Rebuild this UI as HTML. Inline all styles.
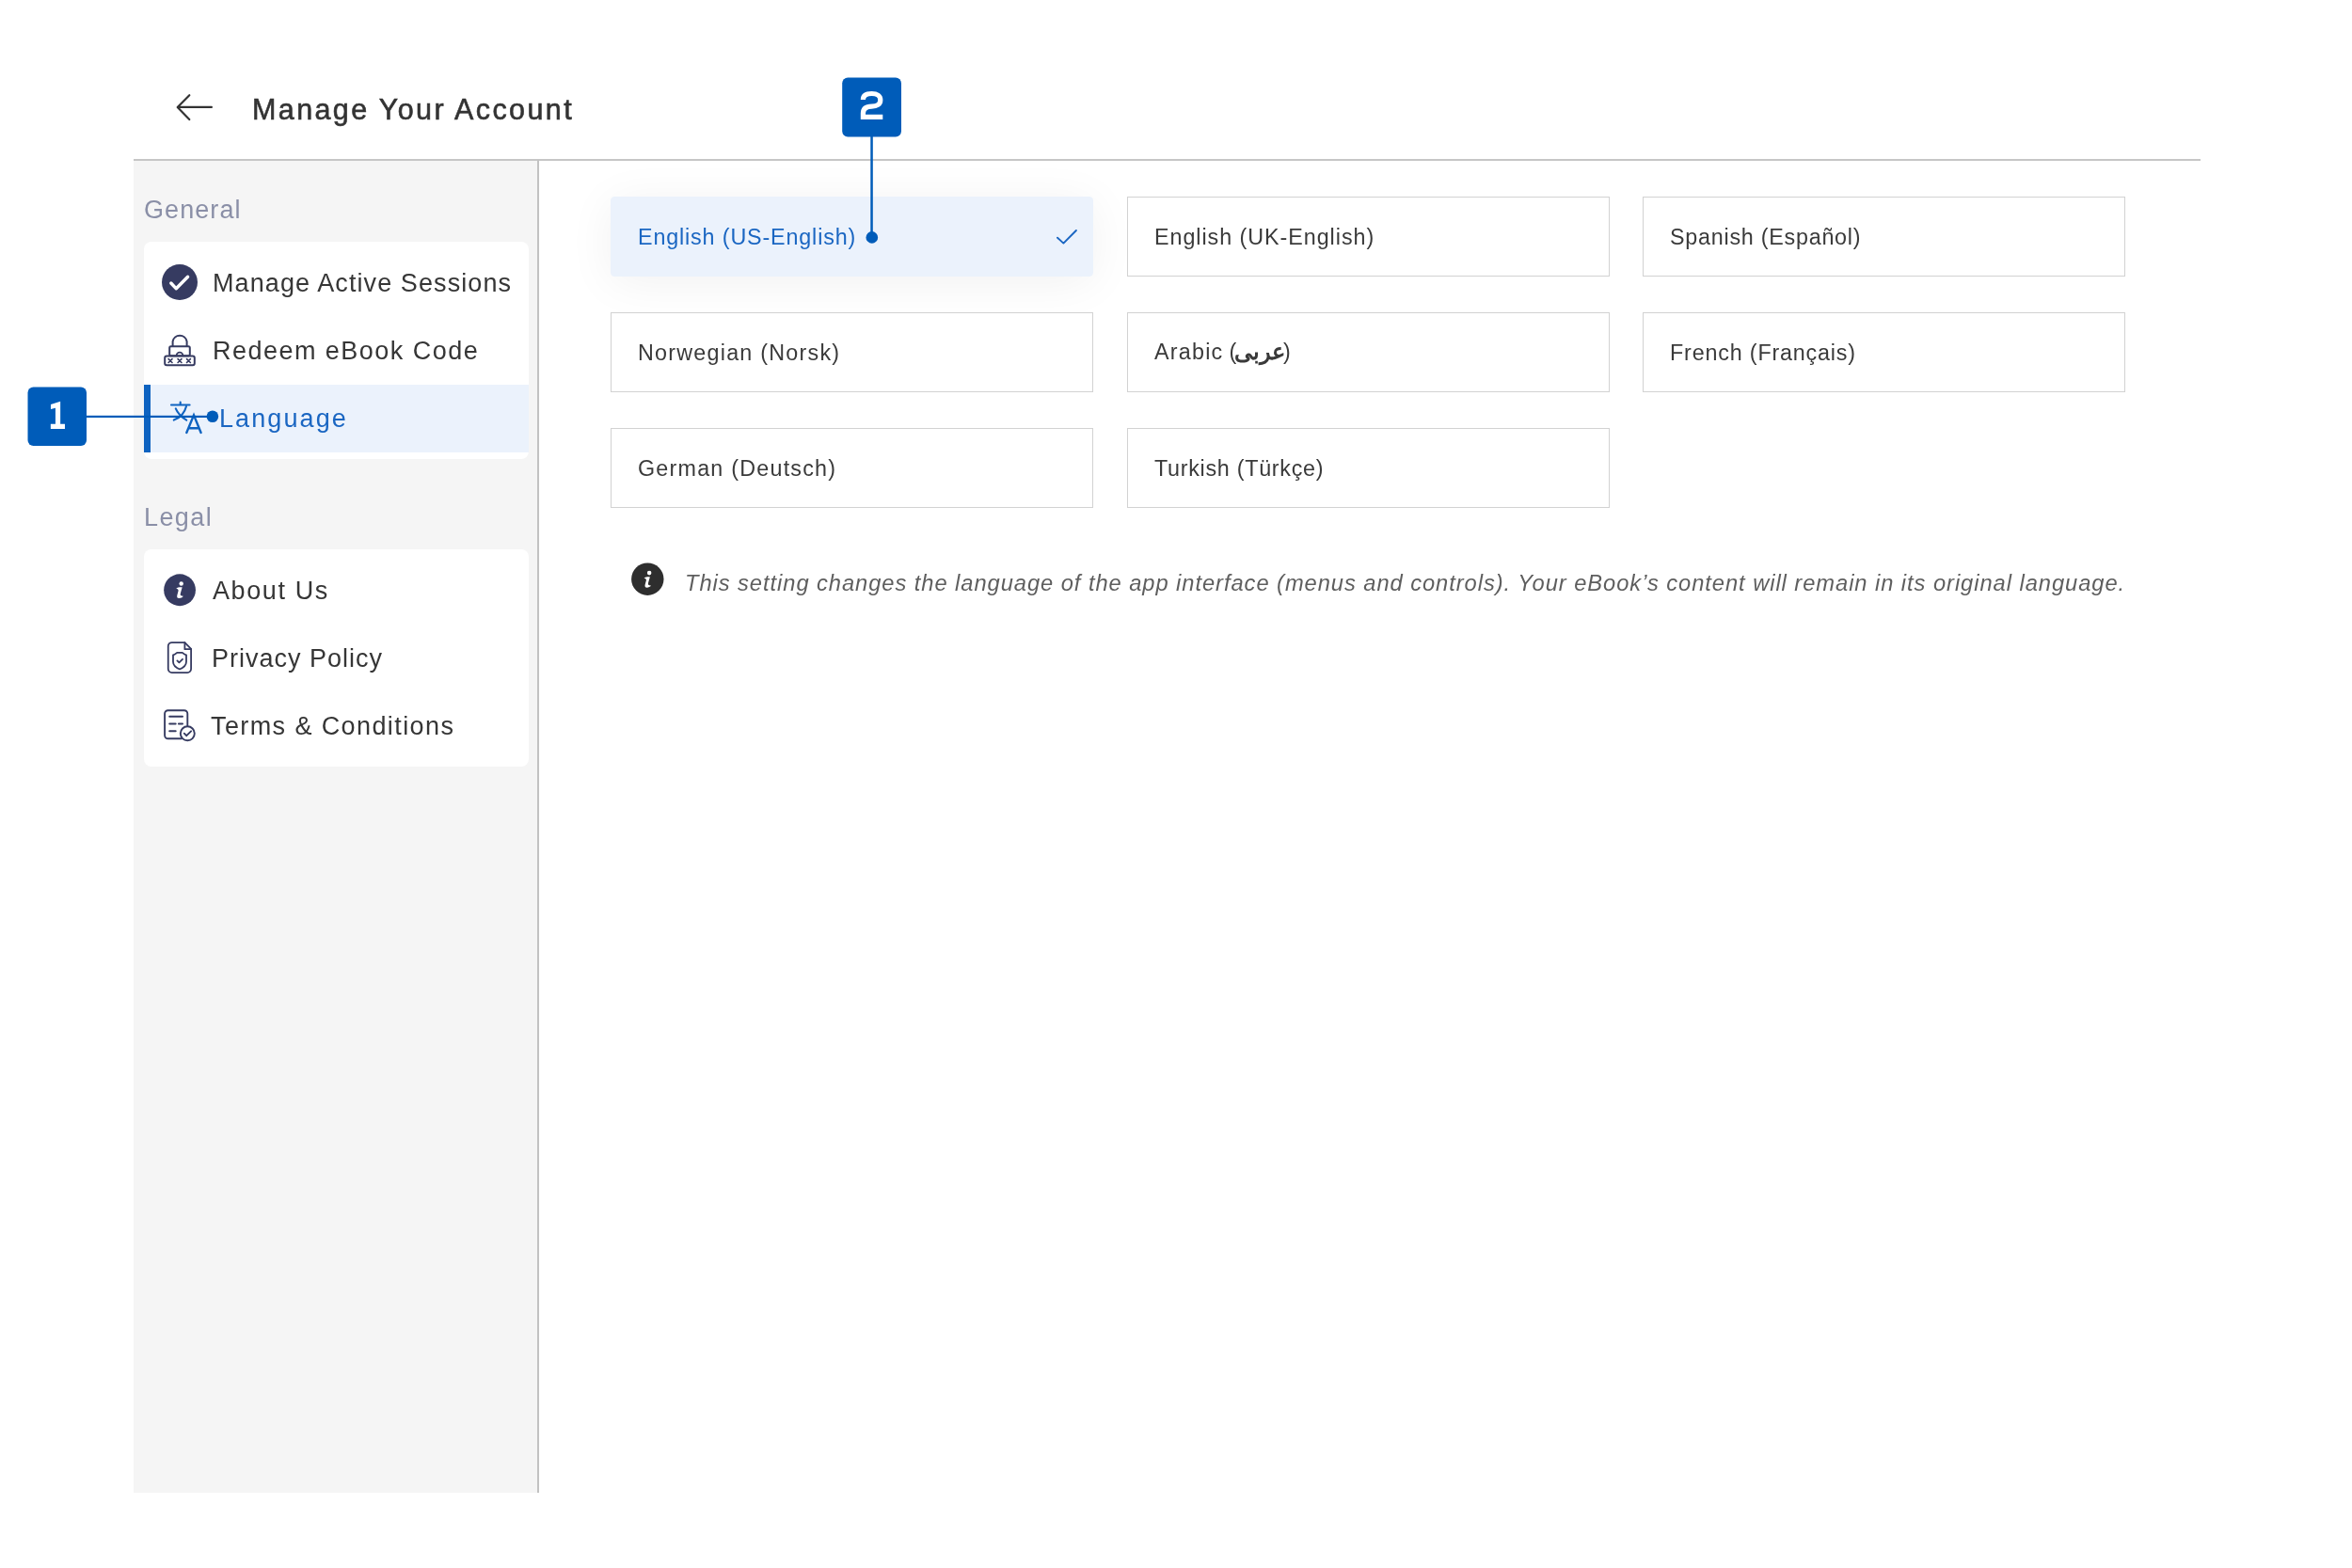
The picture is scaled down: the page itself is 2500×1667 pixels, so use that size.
<!DOCTYPE html>
<html>
<head>
<meta charset="utf-8">
<style>
html,body{margin:0;padding:0;}
body{width:2500px;height:1667px;position:relative;overflow:hidden;background:#fff;font-family:"Liberation Sans",sans-serif;}
.a{position:absolute;}
.t{position:absolute;white-space:nowrap;line-height:1;will-change:transform;}
#hline{left:142px;top:169px;width:2197px;height:2px;background:#c6c6c6;}
#side{left:142px;top:171px;width:429px;height:1416px;background:#f5f5f5;}
#vline{left:571px;top:170px;width:2px;height:1417px;background:#c2c2c2;}
.card{position:absolute;left:153px;width:408.5px;background:#fff;border-radius:8px;}
.item{color:#363636;font-size:27px;}
.lab{color:#8a8fa7;font-size:27px;}
.lang{position:absolute;width:511px;height:83px;border:1px solid #d2d2d2;background:#fff;}
.lang span{will-change:transform;position:absolute;left:28px;top:1px;line-height:83px;font-size:23.3px;color:#3a3a3a;white-space:nowrap;}
#sel{background:#ebf2fc;border-color:#ebf2fc;border-radius:4px;box-shadow:0 6px 50px rgba(0,0,0,0.06);}
#sel span{color:#1a66c2;}
</style>
</head>
<body>
<!-- header -->
<svg class="a" style="left:0;top:0" width="2500" height="200">
  <path d="M224.9,113.9 H188.9 M201.3,101.2 L188.7,113.9 L201.3,127" fill="none" stroke="#333" stroke-width="2.2" stroke-linecap="round" stroke-linejoin="round"/>
</svg>
<div class="t" style="left:268px;top:101px;font-size:30.5px;color:#333;letter-spacing:2.38px;-webkit-text-stroke:0.6px #333;">Manage Your Account</div>

<div class="a" id="hline"></div>
<div class="a" id="side"></div>
<div class="a" id="vline"></div>

<!-- sidebar -->
<div class="t lab" style="left:153px;top:210px;letter-spacing:1.07px;">General</div>
<div class="card" style="top:257px;height:231px;"></div>
<div class="a" style="left:153px;top:409px;width:409px;height:72px;background:#ebf2fc;"></div>
<div class="a" style="left:153px;top:409px;width:7px;height:72px;background:#0f63c0;"></div>

<div class="t lab" style="left:153px;top:537px;letter-spacing:1.4px;">Legal</div>
<div class="card" style="top:584px;height:231px;"></div>
<svg class="a" style="left:0;top:0" width="600" height="1667">
  <!-- check circle -->
  <circle cx="191" cy="300" r="19" fill="#363b61"/>
  <path d="M181.8,301 L187.3,306.8 L199.6,294.2" fill="none" stroke="#fff" stroke-width="3.4" stroke-linecap="round" stroke-linejoin="round"/>
  <!-- lock -->
  <g fill="none" stroke="#363b61" stroke-width="2">
    <path d="M183.6,368.2 V363 A7.6,7.6 0 0 1 198.6,363 V368.2"/>
    <rect x="180.2" y="368.2" width="21.6" height="10" rx="1.5"/>
    <rect x="175.2" y="378.6" width="31.6" height="9.6" rx="2"/>
    <path d="M187.6,378.6 V378 A3.4,3.4 0 0 1 194.4,378 V378.6" stroke-width="1.7"/>
    <path d="M179.1,381.6 l3.9,3.9 m-3.9,0 l3.9,-3.9 M189.05,381.6 l3.9,3.9 m-3.9,0 l3.9,-3.9 M198.5,381.6 l3.9,3.9 m-3.9,0 l3.9,-3.9" stroke-width="1.6" stroke-linecap="round"/>
  </g>
  <!-- translate icon -->
  <g fill="none" stroke="#0f63c0" stroke-width="2.1" stroke-linecap="round">
    <path d="M182,430.5 H201.6 M191.7,427.6 V430.4"/>
    <path d="M186.8,434.4 C188.5,438.5 192,443 198.2,446.6"/>
    <path d="M198,432 C196.5,438 192,444 184.8,446.6"/>
    <path d="M198.3,460 L206,441.4 L213.6,460 M201.3,455.3 H210.8" stroke-width="2.4"/>
  </g>
  <!-- about icon -->
  <circle cx="191.05" cy="627.25" r="16.9" fill="#363b61"/>
  <g transform="translate(191.05,627.25)" fill="#fff">
    <circle cx="1.65" cy="-6.75" r="2.2"/>
    <path d="M-3.85,-1.75 C-2.55,-2.75 -0.05,-3.25 2.55,-3.05 C2.45,-1.75 1.45,0.75 0.75,3.75 C0.25,5.75 0.95,6.25 3.75,6.55 C2.95,8.05 0.95,8.75 -0.55,8.75 C-2.75,8.75 -3.25,7.35 -2.65,5.15 L-1.45,0.75 C-1.25,-0.45 -2.25,-1.25 -3.85,-1.75 Z"/>
  </g>
  <!-- privacy icon -->
  <g fill="none" stroke="#363b61" stroke-width="1.8" stroke-linejoin="round" stroke-linecap="round">
    <path d="M196.4,683.05 H182.75 A4,4 0 0 0 178.75,687.05 V711.03 A4,4 0 0 0 182.75,715.03 H199.1 A4,4 0 0 0 203.1,711.03 V689.8 Z"/>
    <path d="M196.4,683.05 V690.2 H203.1"/>
    <path d="M188.4,693.9 H193.6 C194.6,693.9 195.2,695.6 198,696.3 V703.5 C198,707.5 194.5,710 191,711.5 C187.5,710 184,707.5 184,703.5 V696.3 C186.8,695.6 187.4,693.9 188.4,693.9 Z"/>
    <path d="M188.4,702.4 L190.4,704.4 L194,700.8"/>
  </g>
  <!-- terms icon -->
  <g fill="none" stroke="#363b61" stroke-width="1.9" stroke-linecap="round">
    <path d="M192.9,785.25 H178.6 A3.5,3.5 0 0 1 175.1,781.75 V758.7 A3.5,3.5 0 0 1 178.6,755.2 H195.8 A3.5,3.5 0 0 1 199.3,758.7 V771.5"/>
    <path d="M180.2,761.8 H194 M180.2,769.55 H186.7 M189.9,769.55 H194 M180.2,777.3 H186.7" stroke-width="2"/>
    <circle cx="199.3" cy="779.8" r="7.5"/>
    <path d="M195.8,779.7 L198.2,782.2 L203.1,777.3" stroke-linejoin="round"/>
  </g>
</svg>

<div class="t item" style="left:226px;top:288px;letter-spacing:1.09px;">Manage Active Sessions</div>
<div class="t item" style="left:226px;top:360px;letter-spacing:1.47px;">Redeem eBook Code</div>
<div class="t item" style="left:233px;top:432px;letter-spacing:2.1px;color:#1a66c2;">Language</div>

<div class="t item" style="left:226px;top:615px;letter-spacing:1.6px;">About Us</div>
<div class="t item" style="left:225px;top:687px;letter-spacing:1.0px;">Privacy Policy</div>
<div class="t item" style="left:224px;top:759px;letter-spacing:1.4px;">Terms &amp; Conditions</div>

<!-- language cards -->
<div class="lang" id="sel" style="left:649px;top:209px;"><span style="letter-spacing:0.86px;">English (US-English)</span></div>
<div class="lang" style="left:1198px;top:209px;"><span style="letter-spacing:0.96px;">English (UK-English)</span></div>
<div class="lang" style="left:1746px;top:209px;"><span style="letter-spacing:0.76px;">Spanish (Español)</span></div>
<div class="lang" style="left:649px;top:332px;"><span style="letter-spacing:1.24px;">Norwegian (Norsk)</span></div>
<div class="lang" style="left:1198px;top:332px;"><span style="letter-spacing:1.24px;top:-1px;">Arabic<i style="font-style:normal;letter-spacing:-0.56px;"> </i><i style="font-style:normal;letter-spacing:-2.5px;">(</i><b style="font-weight:bold;letter-spacing:0;font-size:24px;margin-right:-1.8px;">عربى</b>)</span></div>
<div class="lang" style="left:1746px;top:332px;"><span style="letter-spacing:0.83px;">French (Français)</span></div>
<div class="lang" style="left:649px;top:455px;"><span style="letter-spacing:1.23px;">German (Deutsch)</span></div>
<div class="lang" style="left:1198px;top:455px;"><span style="letter-spacing:0.72px;">Turkish (Türkçe)</span></div>

<svg class="a" style="left:0;top:0" width="2500" height="700">
  <path d="M1124,252.7 L1130.4,258.6 L1143.9,245" fill="none" stroke="#1a66c2" stroke-width="1.9" stroke-linecap="round" stroke-linejoin="round"/>
  <!-- info icon -->
  <circle cx="688.3" cy="615.7" r="17.2" fill="#2e2e2e"/>
  <g transform="translate(688.3,616.2) scale(0.97)" fill="#fff">
    <circle cx="1.9" cy="-7.3" r="2.35"/>
    <path d="M-3.85,-1.75 C-2.55,-2.75 -0.05,-3.25 2.55,-3.05 C2.45,-1.75 1.45,0.75 0.75,3.75 C0.25,5.75 0.95,6.25 3.75,6.55 C2.95,8.05 0.95,8.75 -0.55,8.75 C-2.75,8.75 -3.25,7.35 -2.65,5.15 L-1.45,0.75 C-1.25,-0.45 -2.25,-1.25 -3.85,-1.75 Z"/>
  </g>
  <!-- callout lines -->
  <rect x="92" y="441.8" width="134" height="2.2" fill="#005cb9"/>
  <circle cx="225.9" cy="442.8" r="6.3" fill="#005cb9"/>
  <rect x="925.3" y="145" width="2.5" height="108" fill="#005cb9"/>
  <circle cx="926.8" cy="252.4" r="6.3" fill="#005cb9"/>
  <!-- badges -->
  <rect x="29.5" y="411.5" width="62.5" height="62.5" rx="6" fill="#005cb9"/>
  <path d="M53.97,430.04 L64.15,426.8 L64.15,450.8 L68.97,450.8 L68.97,455.9 L53.84,455.9 L53.84,450.8 L58.93,450.8 L58.93,433.8 L53.97,434.9 Z" fill="#fff"/>
  <rect x="895.2" y="82.6" width="62.8" height="62.9" rx="6" fill="#005cb9"/>
  <path d="M917.4,106 C917.4,101 921.5,99.5 926.6,99.5 C932.5,99.5 935.8,102 935.8,106.2 C935.8,111 932,113.1 926.6,113.1 C920.5,113.1 917.4,115.8 917.4,120.5 V124.3 H938.3" fill="none" stroke="#fff" stroke-width="5.2"/>
</svg>

<div class="t" style="left:728px;top:609px;font-size:23.7px;font-style:italic;color:#5e5e5e;letter-spacing:0.95px;">This setting changes the language of the app interface (menus and controls). Your eBook’s content will remain in its original language.</div>
</body>
</html>
